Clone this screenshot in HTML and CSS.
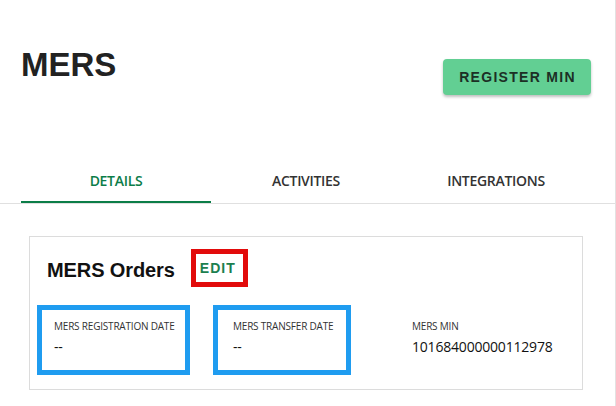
FILE: index.html
```html
<!DOCTYPE html>
<html lang="en">
<head>
<meta charset="utf-8">
<title>MERS</title>
<link rel="stylesheet" href="styles.css">
</head>
<body>
<div class="page">
  <header class="page-header">
    <h1 class="page-title">MERS</h1>
    <button class="btn-register">REGISTER MIN</button>
  </header>
  <nav class="tabs">
    <div class="tab tab-active">DETAILS</div>
    <div class="tab">ACTIVITIES</div>
    <div class="tab">INTEGRATIONS</div>
  </nav>
  <section class="content">
    <div class="card">
      <div class="card-header">
        <h2 class="card-title">MERS Orders</h2>
        <button class="btn-edit">EDIT</button>
      </div>
      <div class="fields">
        <div class="field field-box field-1">
          <div class="field-label">MERS REGISTRATION DATE</div>
          <div class="field-value">--</div>
        </div>
        <div class="field field-box field-2">
          <div class="field-label">MERS TRANSFER DATE</div>
          <div class="field-value">--</div>
        </div>
        <div class="field field-3">
          <div class="field-label">MERS MIN</div>
          <div class="field-value">101684000000112978</div>
        </div>
      </div>
    </div>
  </section>
</div>
</body>
</html>
```

FILE: styles.css
```css
* { box-sizing: border-box; }
html, body { margin: 0; padding: 0; background: #fff; }
body { font-family: "Open Sans", "Noto Sans", sans-serif; color: #222; }

.page {
  width: 616px;
  height: 406px;
  border-right: 1px solid #e2e2e2;
  overflow: hidden;
}

.page-header {
  display: flex;
  justify-content: space-between;
  align-items: flex-start;
  padding: 46px 24px 0 21px;
  height: 160px;
}
.page-title {
  margin: 0;
  font-family: "Liberation Sans", Arial, sans-serif;
  font-weight: 700;
  font-size: 33px;
  line-height: 38px;
  color: #222;
}
.btn-register {
  margin-top: 13px;
  width: 148px;
  height: 36px;
  border: none;
  border-radius: 4px;
  background: #62cf93;
  box-shadow: 0 2px 3px rgba(0, 0, 0, 0.25);
  font-family: "Liberation Sans", Arial, sans-serif;
  font-weight: 700;
  font-size: 14px;
  letter-spacing: 1.3px;
  color: #1c2f25;
  padding: 0 0 0 1px;
}

.tabs {
  display: flex;
  padding: 0 0 0 21px;
  border-bottom: 1px solid #e0e0e0;
}
.tab {
  width: 190px;
  text-align: center;
  font-weight: 600;
  font-size: 14px;
  line-height: 19px;
  letter-spacing: -0.3px;
  padding: 11px 0 11px;
  color: #333;
  border-bottom: 2px solid transparent;
}
.tab-active {
  color: #0b7d48;
  border-bottom-color: #0b7d48;
}

.content {
  padding: 32px 0 0 29px;
}
.card {
  width: 554px;
  height: 154px;
  border: 1px solid #dcdcdc;
  padding: 12px 0 0 0;
}
.card-header {
  display: flex;
  align-items: flex-start;
  padding-left: 17px;
}
.card-title {
  margin: 9px 16px 0 0;
  font-family: "Liberation Sans", Arial, sans-serif;
  font-weight: 700;
  font-size: 20px;
  line-height: 24px;
  letter-spacing: -0.1px;
  color: #111;
}
.btn-edit {
  width: 57px;
  height: 38px;
  border: 5px solid #e20b0b;
  background: #fff;
  padding: 0 0 0 4px;
  text-align: left;
  font-family: "Liberation Sans", Arial, sans-serif;
  font-weight: 700;
  font-size: 14px;
  line-height: 28px;
  letter-spacing: 1px;
  color: #1b7f4f;
}

.fields {
  display: flex;
  gap: 23px;
  padding: 18px 0 0 7px;
}
.field {
  height: 70px;
  padding: 14px 0 0 0;
}
.field-box {
  border: 5px solid #1f9cf0;
  padding: 9px 0 0 12px;
}
.field-1 { width: 153px; }
.field-2 { width: 138px; padding-left: 15px; }
.field-3 { padding-left: 38px; }
.field-label {
  font-size: 10px;
  line-height: 14px;
  letter-spacing: -0.2px;
  color: #333;
  white-space: nowrap;
}
.field-value {
  margin-top: 4px;
  font-size: 14px;
  line-height: 19px;
  letter-spacing: -0.2px;
  color: #111;
}
```
